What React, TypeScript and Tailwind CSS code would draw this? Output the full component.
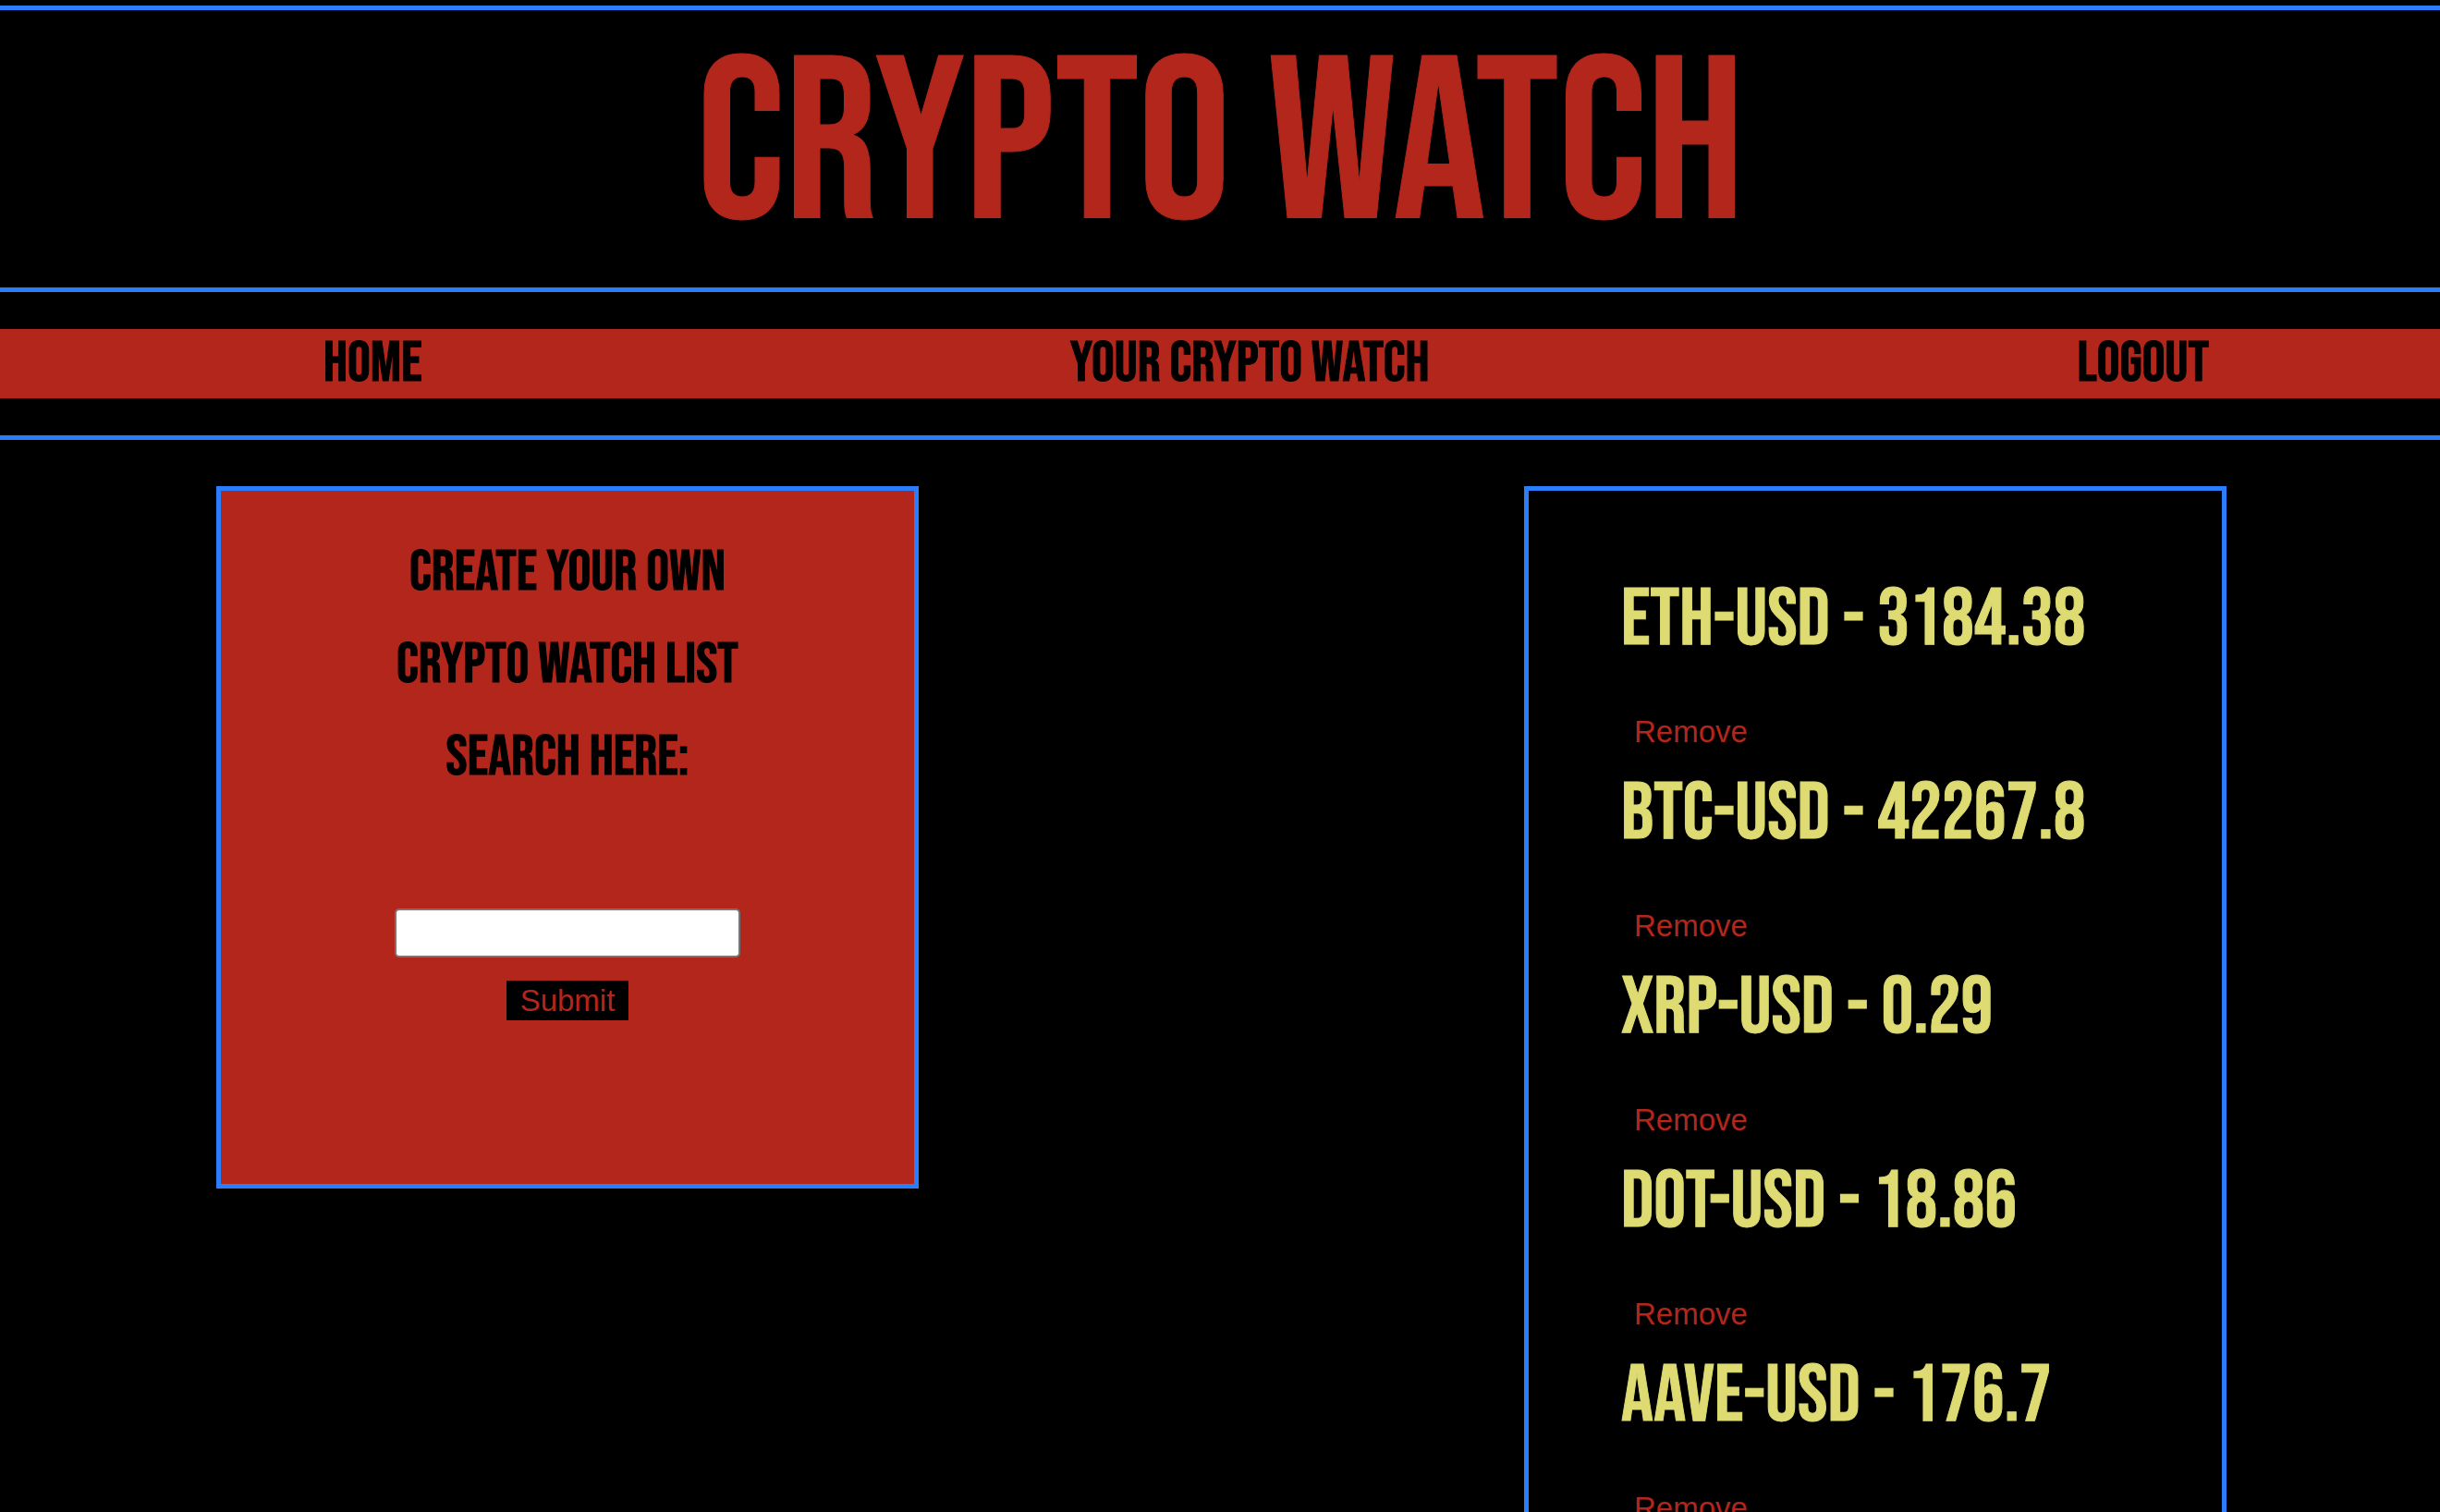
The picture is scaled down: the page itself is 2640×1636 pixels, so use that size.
import { useState, type FormEvent } from "react";

type Coin = { pair: string; price: string };

const initialCoins: Coin[] = [
  { pair: "ETH-USD", price: "3184.38" },
  { pair: "BTC-USD", price: "42267.8" },
  { pair: "XRP-USD", price: "0.29" },
  { pair: "DOT-USD", price: "18.86" },
  { pair: "AAVE-USD", price: "176.7" },
];

const navItems = ["Home", "Your Crypto Watch", "Logout"];

function Header() {
  return (
    <header className="border-y-5 border-[#2a7dfb] text-center">
      <h1 className="text-[250px] leading-[300px] text-[#b3261c]">Crypto Watch</h1>
    </header>
  );
}

function Nav() {
  return (
    <nav className="border-b-5 border-[#2a7dfb] py-10">
      <ul className="flex justify-between bg-[#b3261c] pr-[250px] pl-[350px] text-[62px] leading-[75px]">
        {navItems.map((item) => (
          <li key={item}>
            <a href="#" className="text-black">
              {item}
            </a>
          </li>
        ))}
      </ul>
    </nav>
  );
}

function SearchCard() {
  const [query, setQuery] = useState("");
  const submit = (event: FormEvent) => event.preventDefault();

  return (
    <form
      onSubmit={submit}
      className="flex h-[760px] w-[760px] flex-col items-center border-5 border-[#2a7dfb] bg-[#b3261c] pt-[39px]"
    >
      <label htmlFor="search" className="text-center text-[62px] leading-[100px] text-black">
        Create your own
        <br />
        crypto watch list
        <br />
        Search here:
      </label>
      <input
        id="search"
        type="text"
        value={query}
        onChange={(event) => setQuery(event.target.value)}
        className="mt-[113px] h-[53px] w-[374px] rounded-[5px] border-2 border-[#767676] bg-white px-1 font-['Liberation_Sans',sans-serif] text-[33px] text-black"
      />
      <button
        type="submit"
        className="mt-[25px] h-[43px] bg-black px-[15px] font-['Liberation_Sans',sans-serif] text-[33px] leading-[43px] text-[#b3261c]"
      >
        Submit
      </button>
    </form>
  );
}

function WatchList() {
  const [coins, setCoins] = useState(initialCoins);

  return (
    <ul className="w-[760px] border-5 border-[#2a7dfb] pt-[86px] pb-24 pl-[100px]">
      {coins.map((coin) => (
        <li key={coin.pair} className="flex flex-col items-start pb-[14px]">
          <h2 className="text-[87px] leading-[108px] text-[#dddb71]">
            {coin.pair} - {coin.price}
          </h2>
          <button
            type="button"
            onClick={() => setCoins(coins.filter((other) => other !== coin))}
            className="mt-[45px] h-[43px] bg-black px-[14px] font-['Liberation_Sans',sans-serif] text-[33px] leading-[43px] text-[#b3261c]"
          >
            Remove
          </button>
        </li>
      ))}
    </ul>
  );
}

export default function App() {
  return (
    <div className="min-h-screen bg-black pt-[6px] font-['Bebas_Neue',sans-serif] [&_:is(h1,h2,a,label)]:[-webkit-text-stroke:1px_currentColor]">
      <Header />
      <Nav />
      <main className="flex items-start justify-between pt-[50px] pr-[231px] pl-[234px]">
        <SearchCard />
        <WatchList />
      </main>
    </div>
  );
}
